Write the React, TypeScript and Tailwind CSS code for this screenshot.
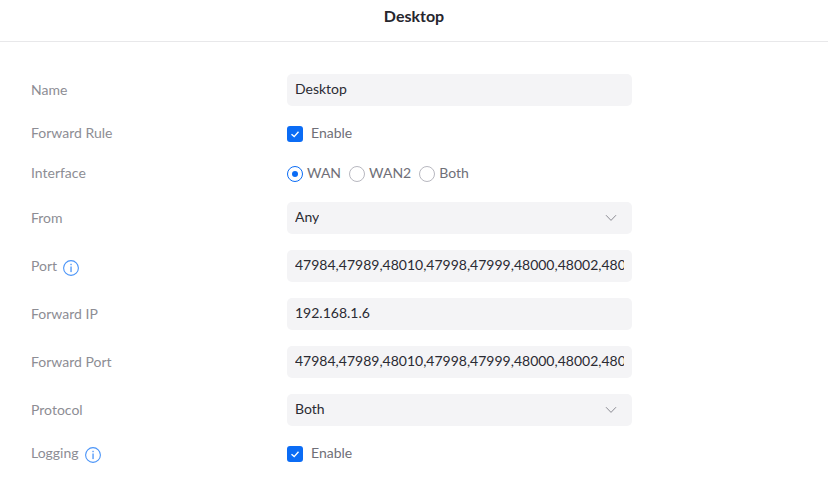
import type { ReactNode } from 'react'

const PORTS = '47984,47989,48010,47998,47999,48000,48002,48010'

function Info({ tight }: { tight?: boolean }) {
    return (
        <svg width="16" height="16" viewBox="0 0 16 16" fill="none" className={`shrink-0 ${tight ? 'mt-[2px]' : 'mt-[4px]'}`}>
            <circle cx="8" cy="8" r="7.4" stroke="#4a94f8" strokeWidth="1.1" />
            <rect x="7.4" y="3.8" width="1.3" height="1.4" fill="#4a94f8" />
            <rect x="7.4" y="6.5" width="1.3" height="5.6" fill="#4a94f8" />
        </svg>
    )
}

function Row({ label, info, tight, className, children }: { label: string; info?: boolean; tight?: boolean; className?: string; children: ReactNode }) {
    return (
        <div className={`flex items-center ${className ?? ''}`}>
            <div className="w-[256px] h-[16px] flex items-center gap-[6px] text-[14px] leading-[16px] text-[#8d8d94]">
                <span className={tight ? 'mb-[3px]' : 'mb-[1px]'}>{label}</span>
                {info && <Info tight={tight} />}
            </div>
            {children}
        </div>
    )
}

function Field({ value, select }: { value: string; select?: boolean }) {
    return (
        <div className="w-[345px] h-[32px] bg-[#f4f4f6] rounded-[5px] px-2 flex items-center justify-between text-[14px] leading-[16px] text-[#2b2b33] pb-[3px]">
            <span className="overflow-hidden whitespace-nowrap">{value}</span>
            {select && (
                <svg width="12" height="8" viewBox="0 0 12 8" fill="none" className="mr-[7px] mt-[2px] shrink-0">
                    <path d="M1 1.2 6 6.4 11 1.2" stroke="#8a8a92" strokeWidth="1" />
                </svg>
            )}
        </div>
    )
}

function Check() {
    return (
        <div className="flex items-center gap-2 h-[16px] text-[14px] leading-[16px] text-[#6f6f78]">
            <div className="w-4 h-4 rounded-[3px] bg-[#0b6cf5] flex items-center justify-center">
                <svg width="10" height="10" viewBox="0 0 10 10" fill="none">
                    <path d="M1.5 5.2 4.2 7.6 8.5 2.8" stroke="#fff" strokeWidth="1.4" />
                </svg>
            </div>
            <span className="mb-[2px]">Enable</span>
        </div>
    )
}

function Radio({ label, on }: { label: string; on?: boolean }) {
    return (
        <div className="flex items-center gap-1 h-[16px] text-[14px] leading-[16px] text-[#6f6f78]">
            <div className={`w-4 h-4 rounded-full border flex items-center justify-center ${on ? 'border-[#0b6cf5]' : 'border-[#b8b8c0]'}`}>
                {on && <div className="w-[6px] h-[6px] rounded-full bg-[#0b6cf5]" />}
            </div>
            <span className="mb-[2px]">{label}</span>
        </div>
    )
}

export default function App() {
    return (
        <div className="w-[828px] h-[495px] bg-white overflow-hidden font-['Lato',sans-serif]">
            <div className="h-[42px] border-b border-[#e8e8ea] flex items-center justify-center pb-[9px] text-[16px] font-bold text-[#26262e]">
                Desktop
            </div>
            <div className="pl-[31px] pt-[32px]">
                <Row label="Name"><Field value="Desktop" /></Row>
                <Row label="Forward Rule" tight className="mt-[20px]"><Check /></Row>
                <Row label="Interface" tight className="mt-[24px]">
                    <div className="flex gap-[8px]">
                        <Radio label="WAN" on />
                        <Radio label="WAN2" />
                        <Radio label="Both" />
                    </div>
                </Row>
                <Row label="From" className="mt-[20px]"><Field value="Any" select /></Row>
                <Row label="Port" info className="mt-[16px]"><Field value={PORTS} /></Row>
                <Row label="Forward IP" className="mt-[16px]"><Field value="192.168.1.6" /></Row>
                <Row label="Forward Port" className="mt-[16px]"><Field value={PORTS} /></Row>
                <Row label="Protocol" className="mt-[16px]"><Field value="Both" select /></Row>
                <Row label="Logging" info tight className="mt-[20px]"><Check /></Row>
            </div>
        </div>
    )
}
